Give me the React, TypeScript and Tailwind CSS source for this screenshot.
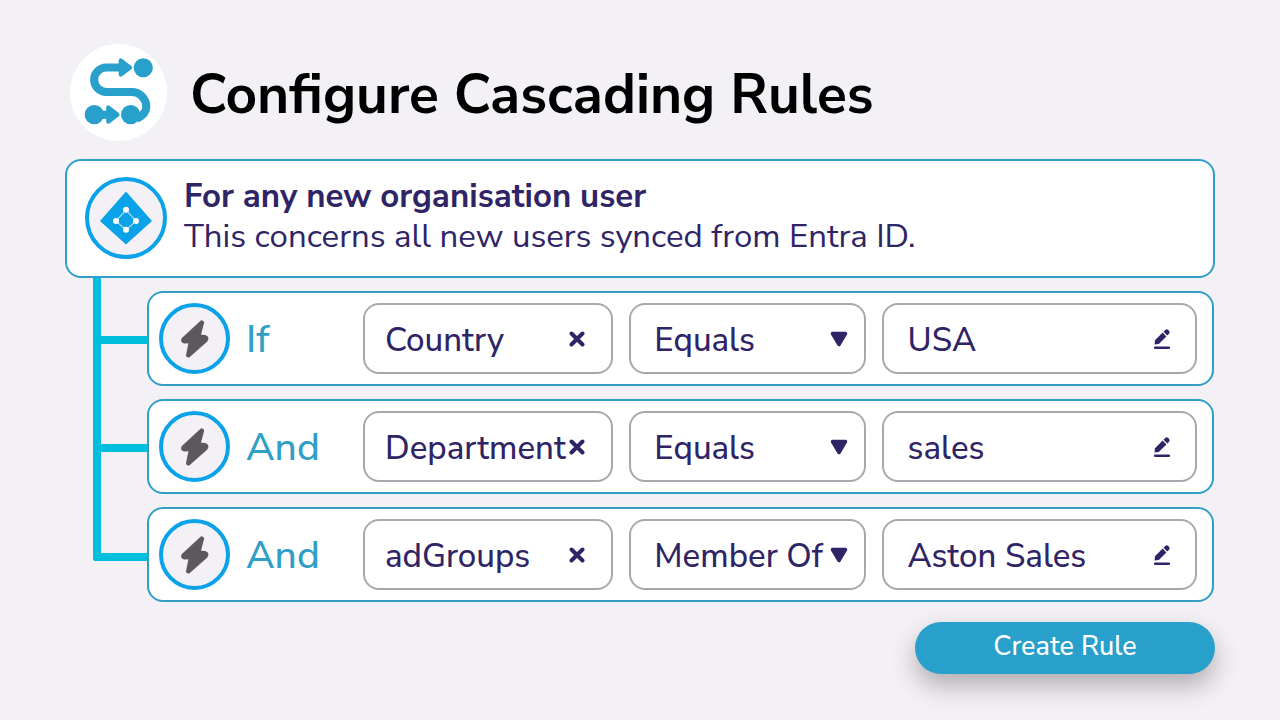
import { useState } from "react";

type Rule = {
  joiner: string;
  attribute: string;
  operator: string;
  value: string;
};

const initialRules: Rule[] = [
  { joiner: "If", attribute: "Country", operator: "Equals", value: "USA" },
  { joiner: "And", attribute: "Department", operator: "Equals", value: "sales" },
  { joiner: "And", attribute: "adGroups", operator: "Member Of", value: "Aston Sales" },
];

function RouteIcon() {
  return (
    <svg viewBox="0 0 96 96" className="size-[97px]" aria-hidden="true">
      <path
        d="M50 23.300H36a12 12 0 0 0 0 24.200H61a14.500 14.500 0 0 1 14.500 14.500C75.500 67.500 72 71 66 74"
        fill="none"
        stroke="#28a0cb"
        strokeWidth="8"
      />
      <g fill="#28a0cb" stroke="#28a0cb" strokeWidth="4" strokeLinejoin="round">
        <path d="M50.200 16.200v14.200l9.300-7.100z" />
        <path d="M37.800 62.800v14.200l9.300-7.100z" />
      </g>
      <path d="M22 66h18v8H22z" fill="#28a0cb" />
      <circle cx="72.500" cy="23.500" r="9.500" fill="#28a0cb" />
      <circle cx="24" cy="69.900" r="9.500" fill="#28a0cb" />
      <circle cx="60" cy="69.900" r="9.500" fill="#28a0cb" />
    </svg>
  );
}

function DirectoryIcon() {
  return (
    <svg viewBox="0 0 52 54" className="h-[54px] w-[52px]" aria-hidden="true">
      <path d="M26 .5 52 30 26 53.500 0 30z" fill="#0aa2e8" />
      <path d="M26 19 36 30 26 39 16 30z" fill="none" stroke="#fff" strokeWidth="1" />
      <g fill="#fff">
        <circle cx="26" cy="18.800" r="3" />
        <circle cx="36" cy="30" r="3" />
        <circle cx="26" cy="38.800" r="3" />
        <circle cx="16" cy="30" r="3" />
      </g>
    </svg>
  );
}

function BoltIcon() {
  return (
    <svg viewBox="0 0 28 38" className="h-[38px] w-7" aria-hidden="true">
      <path
        d="M20.800 2.600 2.700 19.300Q1.700 21 3.500 21.300L10.200 20.700 7.300 35.200 24.600 20Q26 18 24 17.300L17.200 16.800z"
        fill="#5b595e"
        stroke="#5b595e"
        strokeWidth="4.500"
        strokeLinejoin="round"
      />
    </svg>
  );
}

function CrossIcon() {
  return (
    <svg viewBox="0 0 16 16" className="size-4" aria-hidden="true">
      <path d="m2.500 2.500 11 11m0-11-11 11" stroke="#2f2566" strokeWidth="4" strokeLinecap="round" />
    </svg>
  );
}

function CaretIcon() {
  return (
    <svg viewBox="0 0 18 16" className="h-4 w-[18px]" aria-hidden="true">
      <path
        d="M2.500 2.500h13L9 13.500z"
        fill="#2f2566"
        stroke="#2f2566"
        strokeWidth="3.500"
        strokeLinejoin="round"
      />
    </svg>
  );
}

function PencilIcon() {
  return (
    <svg viewBox="0 0 18 22" className="h-[22px] w-[18px]" aria-hidden="true">
      <path d="M1.500 16.500 2 12.200 9.600 4.600 13.400 8.400 5.800 16z" fill="#2f2566" />
      <path
        d="m10.500 3.700 1.700-1.700a2.200 2.200 0 0 1 3 0l.8.800a2.200 2.200 0 0 1 0 3l-1.700 1.700z"
        fill="#2f2566"
      />
      <path d="M2.200 19.700h13.600" stroke="#2f2566" strokeWidth="2.600" strokeLinecap="round" />
    </svg>
  );
}

const boxStyle = "h-[71px] min-w-0 rounded-2xl border-2 border-[#aaa8ae] bg-white";
const textStyle = "pt-1 text-[33px] font-medium text-[#2f2566] outline-none";

function RuleRow({ rule, last, onChange }: { rule: Rule; last: boolean; onChange: (rule: Rule) => void }) {
  return (
    <li className="flex">
      <div className="ml-7 flex w-[54px] shrink-0 flex-col" aria-hidden="true">
        <div
          className={
            last
              ? "h-[67px] rounded-bl-[3px] border-b-8 border-l-8 border-[#00bfdd]"
              : "h-[66px] border-b-8 border-l-8 border-[#00bfdd]"
          }
        />
        {!last && <div className="flex-1 border-l-8 border-[#00bfdd]" />}
      </div>
      <div className="mt-[13px] flex min-w-0 flex-1 items-center rounded-2xl border-2 border-[#309fc6] bg-white py-2.5 pr-[15px] pl-2.5">
        <span className="flex size-[71px] shrink-0 items-center justify-center rounded-full border-4 border-[#0aa2e8] bg-[#f3f1f5]">
          <BoltIcon />
        </span>
        <span className="w-[133px] shrink-0 pt-px pl-4 text-[39px] leading-none font-medium text-[#309fc6]">
          {rule.joiner}
        </span>
        <div className="grid min-w-0 flex-1 grid-cols-[250fr_236fr_315fr] gap-4">
          <div className={`${boxStyle} flex items-center pr-[26px] pl-5`}>
            <input
              aria-label="Attribute"
              className={`${textStyle} w-0 flex-1`}
              value={rule.attribute}
              onChange={(e) => onChange({ ...rule, attribute: e.target.value })}
            />
            <button type="button" aria-label="Clear attribute" onClick={() => onChange({ ...rule, attribute: "" })}>
              <CrossIcon />
            </button>
          </div>
          <div className={`${boxStyle} relative`}>
            <select
              aria-label="Operator"
              className={`${textStyle} h-full w-full appearance-none rounded-2xl bg-transparent pl-[23px]`}
              value={rule.operator}
              onChange={(e) => onChange({ ...rule, operator: e.target.value })}
            >
              <option>Equals</option>
              <option>Member Of</option>
            </select>
            <span className="pointer-events-none absolute inset-y-0 right-4 flex items-center">
              <CaretIcon />
            </span>
          </div>
          <div className={`${boxStyle} flex items-center pr-6 pl-6`}>
            <input
              aria-label="Value"
              className={`${textStyle} w-0 flex-1`}
              value={rule.value}
              onChange={(e) => onChange({ ...rule, value: e.target.value })}
            />
            <button type="button" aria-label="Edit value">
              <PencilIcon />
            </button>
          </div>
        </div>
      </div>
    </li>
  );
}

export default function App() {
  const [rules, setRules] = useState(initialRules);

  return (
    <main className="min-h-screen bg-[#f3f1f5] px-[65px] pt-11 pb-11 font-['Nunito_Sans','Nunito','Open_Sans',sans-serif] text-[#2f2566]">
      <header className="flex items-center gap-[23px] pl-[5px]">
        <span className="shrink-0 rounded-full bg-white">
          <RouteIcon />
        </span>
        <h1 className="pt-1 text-[55px] leading-none font-bold text-black">Configure Cascading Rules</h1>
      </header>

      <section className="mt-[18px] flex items-center gap-[17px] rounded-2xl border-2 border-[#309fc6] bg-white px-[18px] pt-4 pb-[17px]">
        <span className="flex size-[82px] shrink-0 items-center justify-center rounded-full border-4 border-[#0aa2e8] bg-[#f3f1f5]">
          <DirectoryIcon />
        </span>
        <div className="pb-0.5 text-[33px] leading-10">
          <h2 className="font-bold">For any new organisation user</h2>
          <p className="font-normal">This concerns all new users synced from Entra ID.</p>
        </div>
      </section>

      <ul className="pr-px">
        {rules.map((rule, i) => (
          <RuleRow
            key={i}
            rule={rule}
            last={i === rules.length - 1}
            onChange={(next) => setRules(rules.map((r, j) => (j === i ? next : r)))}
          />
        ))}
      </ul>

      <div className="mt-5 flex justify-end">
        <button
          type="button"
          className="h-[52px] w-[300px] rounded-full bg-[#28a0cb] pb-0.5 text-[27px] font-medium text-white shadow-[0_12px_24px_rgba(60,50,50,0.35)]"
        >
          Create Rule
        </button>
      </div>
    </main>
  );
}
